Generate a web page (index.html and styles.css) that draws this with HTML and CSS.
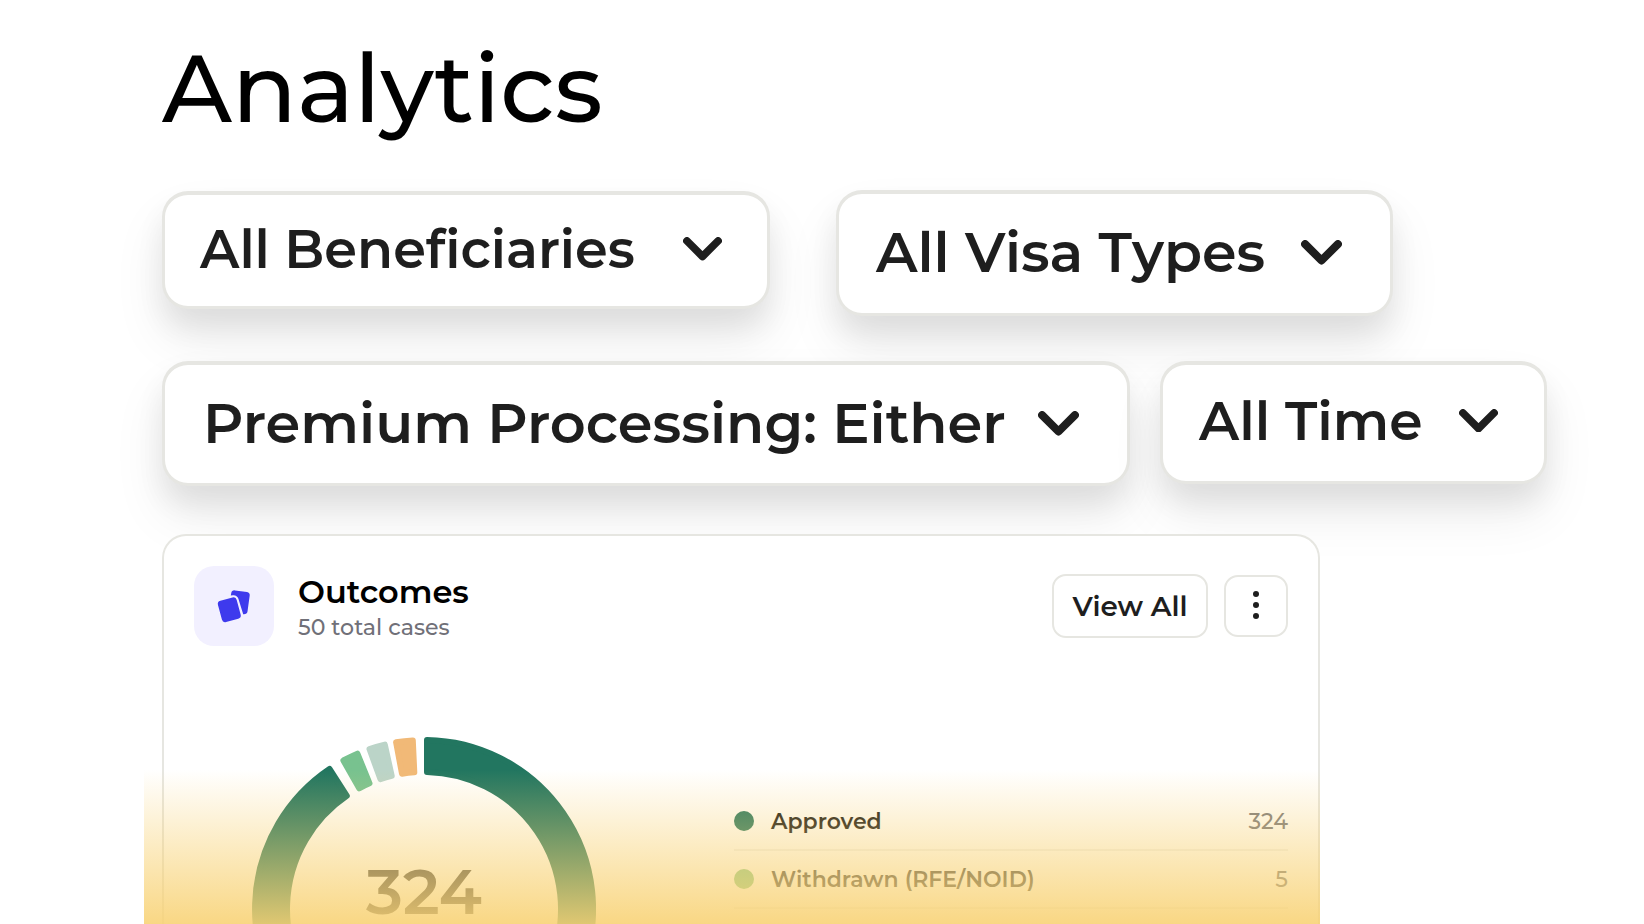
FILE: index.html
```html
<!DOCTYPE html>
<html lang="en">
<head>
    <meta charset="UTF-8">
    <meta name="viewport" content="width=device-width, initial-scale=1.0">
    <title>Analytics</title>
    <link rel="stylesheet" href="styles.css">
</head>
<body>
    <div class="page">
        <h1>Analytics</h1>

        <!-- Filters -->
        <div class="filter-row">
            <button class="filter beneficiaries">
                <span>All Beneficiaries</span>
                <svg class="chevron" viewBox="0 0 40 24"><path d="M4 4L20 20L36 4"/></svg>
            </button>
            <button class="filter visa-types">
                <span>All Visa Types</span>
                <svg class="chevron" viewBox="0 0 40 24"><path d="M4 4L20 20L36 4"/></svg>
            </button>
        </div>
        <div class="filter-row second">
            <button class="filter premium">
                <span>Premium Processing: Either</span>
                <svg class="chevron" viewBox="0 0 40 24"><path d="M4 4L20 20L36 4"/></svg>
            </button>
            <button class="filter time">
                <span>All Time</span>
                <svg class="chevron" viewBox="0 0 40 24"><path d="M4 4L20 20L36 4"/></svg>
            </button>
        </div>

        <!-- Outcomes card -->
        <div class="card">
            <div class="card-header">
                <div class="card-icon">
                    <svg viewBox="0 0 34 34">
                        <path d="M14.2 4.2Q14.8 1 18 1.4L30 3Q33 3.5 32.7 6.5L30.5 22.5Q30 25.5 26.2 25.2L21.4 9.8Q20 6 16 6.3L13.8 6.4Z"/>
                        <rect x="2.6" y="9.7" width="19.4" height="22" rx="3.4" transform="rotate(-15 12.5 20.7)"/>
                    </svg>
                </div>
                <div class="card-title">
                    <h2>Outcomes</h2>
                    <p>50 total cases</p>
                </div>
                <button class="view-btn">View All</button>
                <button class="more-btn">
                    <svg viewBox="0 0 6 28"><circle cx="3" cy="3" r="3"/><circle cx="3" cy="14" r="3"/><circle cx="3" cy="25" r="3"/></svg>
                </button>
            </div>
            <div class="card-body">
                <div class="donut">
                    <svg viewBox="-172 -172 344 344">
                        <path class="approved" d="M3 -169A169 169 0 1 1 -94.5 -140.1L-77.2 -113.2A137 137 0 1 0 3 -137Z"/>
                        <path class="withdrawn" d="M-80.6 -148.5A169 169 0 0 1 -66.6 -155.3L-54.5 -125.7A137 137 0 0 0 -64.8 -120.7Z"/>
                        <path class="pending" d="M-54.5 -160A169 169 0 0 1 -39.2 -164.4L-32.3 -133.1A137 137 0 0 0 -43.6 -129.9Z"/>
                        <path class="denied" d="M-27.9 -166.7A169 169 0 0 1 -11.2 -168.6L-9.7 -136.7A137 137 0 0 0 -22 -135.2Z"/>
                    </svg>
                    <span class="total">324</span>
                </div>
                <ul class="legend">
                    <li><i class="dot green"></i><span>Approved</span><b>324</b></li>
                    <li class="muted"><i class="dot light"></i><span>Withdrawn (RFE/NOID)</span><b>5</b></li>
                </ul>
            </div>
        </div>
    </div>
    <div class="fade"></div>
</body>
</html>
```
FILE: styles.css
```css
* {
    box-sizing: border-box;
}
body {
    font-family: Montserrat, Inter, sans-serif;
    background-color: #fff;
    color: #1e1e1e;
    margin: 0;
    height: 924px;
    overflow: hidden;
    position: relative;
}
.page {
    padding: 38px 0 0 162px;
}
h1 {
    margin: 0;
    font-size: 95.5px;
    font-weight: 500;
    line-height: 100px;
    color: #000;
}
button {
    font-family: inherit;
    color: inherit;
    background: #fff;
    cursor: pointer;
}

/* Filters */
.filter-row {
    display: flex;
    align-items: flex-start;
    gap: 66px;
    height: 171px;
    margin-top: 52px;
}
.filter-row.second {
    gap: 30px;
    height: 173px;
    margin-top: 0;
}
.filter {
    display: flex;
    align-items: center;
    justify-content: space-between;
    border: 3px solid #e6e6e2;
    border-top-width: 4px;
    border-radius: 26px;
    font-weight: 600;
    line-height: 1;
    white-space: nowrap;
    box-shadow: 0 18px 28px rgba(0, 0, 0, 0.07), 0 30px 52px rgba(0, 0, 0, 0.08);
}
.chevron {
    fill: none;
    stroke: #1e1e1e;
    stroke-width: 7.8;
    stroke-linecap: round;
    stroke-linejoin: round;
}
.beneficiaries {
    width: 608px;
    height: 118px;
    margin-top: 1px;
    padding: 0 45px 3px 35px;
    font-size: 52.6px;
}
.beneficiaries .chevron {
    width: 39px;
}
.visa-types {
    width: 557px;
    height: 126px;
    padding: 0 48px 2px 37px;
    font-size: 55.5px;
}
.visa-types .chevron {
    width: 41px;
}
.premium {
    width: 968px;
    height: 125px;
    padding: 0 48px 1px 38px;
    font-size: 55.8px;
}
.premium .chevron {
    width: 41px;
}
.time {
    width: 387px;
    height: 123px;
    padding: 0 46px 5px 36px;
    font-size: 53.6px;
}
.time .chevron {
    width: 39px;
}

/* Card */
.card {
    position: relative;
    width: 1158px;
    height: 390px;
    padding: 30px;
    background: #fff;
    border: 2px solid #e6e6e1;
    border-bottom: none;
    border-radius: 24px 24px 0 0;
    overflow: hidden;
}
.card-header {
    display: flex;
    align-items: center;
    height: 80px;
}
.card-icon {
    display: flex;
    align-items: center;
    justify-content: center;
    width: 80px;
    height: 80px;
    margin-right: 24px;
    background: #f2f0ff;
    border-radius: 20px;
}
.card-icon svg {
    width: 34px;
    fill: #3e3aed;
}
.card-title {
    flex: 1;
    padding-top: 3px;
}
.card-title h2 {
    margin: 0;
    font-size: 32px;
    font-weight: 600;
    line-height: 40px;
    color: #000;
}
.card-title p {
    margin: 0;
    font-size: 22.1px;
    font-weight: 500;
    line-height: 31px;
    color: #707078;
}
.view-btn {
    width: 156px;
    height: 64px;
    padding: 0;
    border: 2px solid #e6e6e1;
    border-radius: 14px;
    font-size: 27.8px;
    font-weight: 600;
}
.more-btn {
    display: flex;
    align-items: center;
    justify-content: center;
    width: 64px;
    height: 62px;
    margin-left: 16px;
    padding-bottom: 3px;
    border: 2px solid #e6e6e1;
    border-radius: 14px;
}
.more-btn svg {
    width: 6px;
    fill: #1e1e1e;
}
.card-body {
    display: flex;
    padding: 91px 0 0 58px;
}

/* Donut */
.donut {
    display: grid;
    width: 344px;
    height: 344px;
}
.donut svg,
.donut .total {
    grid-area: 1 / 1;
}
.donut path {
    stroke-width: 6;
    stroke-linejoin: round;
}
.donut .approved {
    fill: #227660;
    stroke: #227660;
}
.donut .withdrawn {
    fill: #78c28f;
    stroke: #78c28f;
}
.donut .pending {
    fill: #bbd4c8;
    stroke: #bbd4c8;
}
.donut .denied {
    fill: #f1b977;
    stroke: #f1b977;
}
.donut .total {
    height: 52px;
    margin-top: 129px;
    font-size: 63.5px;
    font-weight: 600;
    line-height: 52px;
    text-align: center;
    color: #444;
}
.legend {
    flex: 1;
    margin: 56px 0 0 138px;
    padding: 0;
    list-style: none;
}
.legend li {
    display: flex;
    align-items: center;
    height: 58px;
    border-bottom: 2px solid #f2f2ef;
    font-size: 22px;
    font-weight: 600;
}
.legend span {
    flex: 1;
    color: #111;
}
.legend .muted span {
    color: #444;
}
.legend b {
    font-weight: 500;
    color: #77777c;
}
.dot {
    width: 20px;
    height: 20px;
    margin-right: 17px;
    border-radius: 50%;
}
.dot.green {
    background: #227660;
}
.dot.light {
    background: #86c88c;
}

/* Yellow fade over the bottom of the card */
.fade {
    position: absolute;
    left: 144px;
    top: 770px;
    width: 1176px;
    height: 154px;
    background: linear-gradient(rgba(248, 210, 116, 0), #f8d274 174px);
    pointer-events: none;
}
```
